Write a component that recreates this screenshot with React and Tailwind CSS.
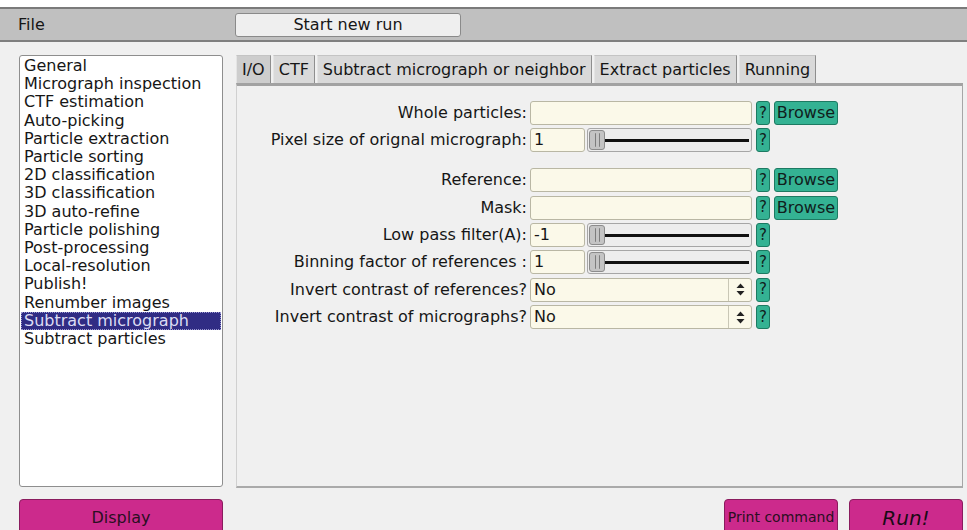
import React from "react";

const jobTypes = [
  "General",
  "Micrograph inspection",
  "CTF estimation",
  "Auto-picking",
  "Particle extraction",
  "Particle sorting",
  "2D classification",
  "3D classification",
  "3D auto-refine",
  "Particle polishing",
  "Post-processing",
  "Local-resolution",
  "Publish!",
  "Renumber images",
  "Subtract micrograph",
  "Subtract particles",
];

const tabs = ["I/O", "CTF", "Subtract micrograph or neighbor", "Extract particles", "Running"];

const HelpButton = () => (
  <button className="w-[14px] h-[24px] shrink-0 rounded-[3px] border border-[#1d7a62] bg-[#34b293] text-[15px] leading-none text-[#10201c] flex items-center justify-center">
    ?
  </button>
);

const BrowseButton = () => (
  <button className="w-[64px] h-[24px] shrink-0 rounded-[3px] border border-[#1d7a62] bg-[#34b293] text-[16px] leading-none text-[#10201c] flex items-center justify-center">
    Browse
  </button>
);

const Label = ({ children }) => (
  <div className="w-[293px] shrink-0 pr-[3px] text-right whitespace-nowrap">{children}</div>
);

const FileRow = ({ label }) => (
  <div className="flex items-center h-[24px]">
    <Label>{label}</Label>
    <div className="w-[222px] h-[24px] rounded-[3px] border border-[#b9b7a4] bg-[#fbf9e9]" />
    <div className="ml-[4px] flex gap-[4px]">
      <HelpButton />
      <BrowseButton />
    </div>
  </div>
);

const SliderRow = ({ label, value }) => (
  <div className="flex items-center h-[24px]">
    <Label>{label}</Label>
    <div className="w-[55px] h-[24px] rounded-[3px] border border-[#b9b7a4] bg-[#fbf9e9] pl-[3px] flex items-center">
      {value}
    </div>
    <div className="ml-[2px] w-[165px] h-[24px] rounded-[3px] border border-[#a6a6a6] bg-[#ededed] flex items-center pl-[1px] pr-[2px]">
      <div className="w-[16px] h-[20px] rounded-[3px] border border-[#8c8c8c] bg-[#c4c4c4] flex items-center justify-center">
        <div className="w-[5px] h-[14px] border-x border-[#7d7d7d] rounded-[1px]" />
      </div>
      <div className="flex-1 h-[3px] bg-[#111]" />
    </div>
    <div className="ml-[4px]">
      <HelpButton />
    </div>
  </div>
);

const ChoiceRow = ({ label, value }) => (
  <div className="flex items-center h-[24px]">
    <Label>{label}</Label>
    <div className="w-[222px] h-[24px] rounded-[3px] border border-[#b9b7a4] bg-[#fbf9e9] flex items-center">
      <div className="flex-1 pl-[3px]">{value}</div>
      <div className="w-[23px] h-full border-l border-[#c9c7b6] flex items-center justify-center">
        <svg width="9" height="13" viewBox="0 0 9 13">
          <path d="M4.5 0.5 L8.5 5 L0.5 5 Z" fill="#222" />
          <path d="M4.5 12.5 L8.5 8 L0.5 8 Z" fill="#222" />
        </svg>
      </div>
    </div>
    <div className="ml-[4px]">
      <HelpButton />
    </div>
  </div>
);

export default function App() {
  return (
    <div
      className="w-[967px] h-[530px] overflow-hidden bg-[#f0f0f0] text-[16px] text-[#161616] flex flex-col"
      style={{ fontFamily: '"DejaVu Sans", "Liberation Sans", sans-serif' }}
    >
      {/* top strip + menu bar */}
      <div className="h-[7px] bg-white shrink-0" />
      <div className="h-[35px] shrink-0 bg-[#c0c0c0] border-t-2 border-b-2 border-t-[#7a7a7a] border-b-[#7f7f7f] flex items-center pt-[1px]">
        <div className="w-[235px] pl-[18px]">File</div>
        <button className="w-[226px] h-[24px] rounded-[3px] border border-[#8a8a8a] bg-[#efefef] flex items-center justify-center">
          Start new run
        </button>
      </div>

      {/* job list + parameter tabs */}
      <div className="flex pt-[13px] shrink-0">
        <div className="ml-[19px] w-[204px] h-[432px] rounded-[3px] border border-[#8e8e8e] bg-white px-[1px] pt-[1px] leading-[18.2px]">
          {jobTypes.map((job) => (
            <div
              key={job}
              className={
                job === "Subtract micrograph"
                  ? "pl-[3px] bg-[#302c84] text-[#dcdcf4] outline-1 outline-dotted outline-[#9a98d0] -outline-offset-1"
                  : "pl-[3px]"
              }
            >
              {job}
            </div>
          ))}
        </div>

        <div className="ml-[13px] w-[727px] flex flex-col">
          <div className="h-[28px] flex items-end gap-[2px]">
            {tabs.map((t, i) => (
              <div
                key={t}
                className={
                  "h-[28px] px-[5px] pt-[1px] flex items-center border-t border-l border-r border-t-[#c4c4c4] border-l-[#e4e4e4] border-r-[#8e8e8e] whitespace-nowrap " +
                  (i === 0 ? "bg-[#cdcdcd]" : "bg-[#d9d9d9]")
                }
              >
                {t}
              </div>
            ))}
          </div>
          <div className="h-[405px] border-t-[3px] border-t-[#a2a2a2] border-l border-l-[#d0d0d0] border-r border-r-[#a6a6a6] border-b-2 border-b-[#aaaaaa] pt-[15px] flex flex-col">
            <div className="flex flex-col gap-[3.3px]">
              <FileRow label="Whole particles:" />
              <SliderRow label="Pixel size of orignal micrograph:" value="1" />
            </div>
            <div className="mt-[16px] flex flex-col gap-[3.4px]">
              <FileRow label="Reference:" />
              <FileRow label="Mask:" />
              <SliderRow label="Low pass filter(A):" value="-1" />
              <SliderRow label="Binning factor of references :" value="1" />
              <ChoiceRow label="Invert contrast of references?" value="No" />
              <ChoiceRow label="Invert contrast of micrographs?" value="No" />
            </div>
          </div>
        </div>
      </div>

      {/* bottom action buttons */}
      <div className="flex pt-[11px]">
        <button className="ml-[19px] w-[204px] h-[34px] rounded-t-[4px] border border-[#8a1c5e] bg-[#cc2a8c] text-[#2a0f22] flex items-start justify-center pt-[6px]">
          Display
        </button>
        <button className="ml-[501px] w-[114px] h-[34px] rounded-t-[4px] border border-[#8a1c5e] bg-[#cc2a8c] text-[14px] text-[#2a0f22] flex items-start justify-center pt-[7px] whitespace-nowrap">
          Print command
        </button>
        <button className="ml-[11px] w-[114px] h-[34px] rounded-t-[4px] border border-[#8a1c5e] bg-[#cc2a8c] text-[20px] italic text-[#1a0a16] flex items-start justify-center pt-[3px]">
          Run!
        </button>
      </div>
    </div>
  );
}
